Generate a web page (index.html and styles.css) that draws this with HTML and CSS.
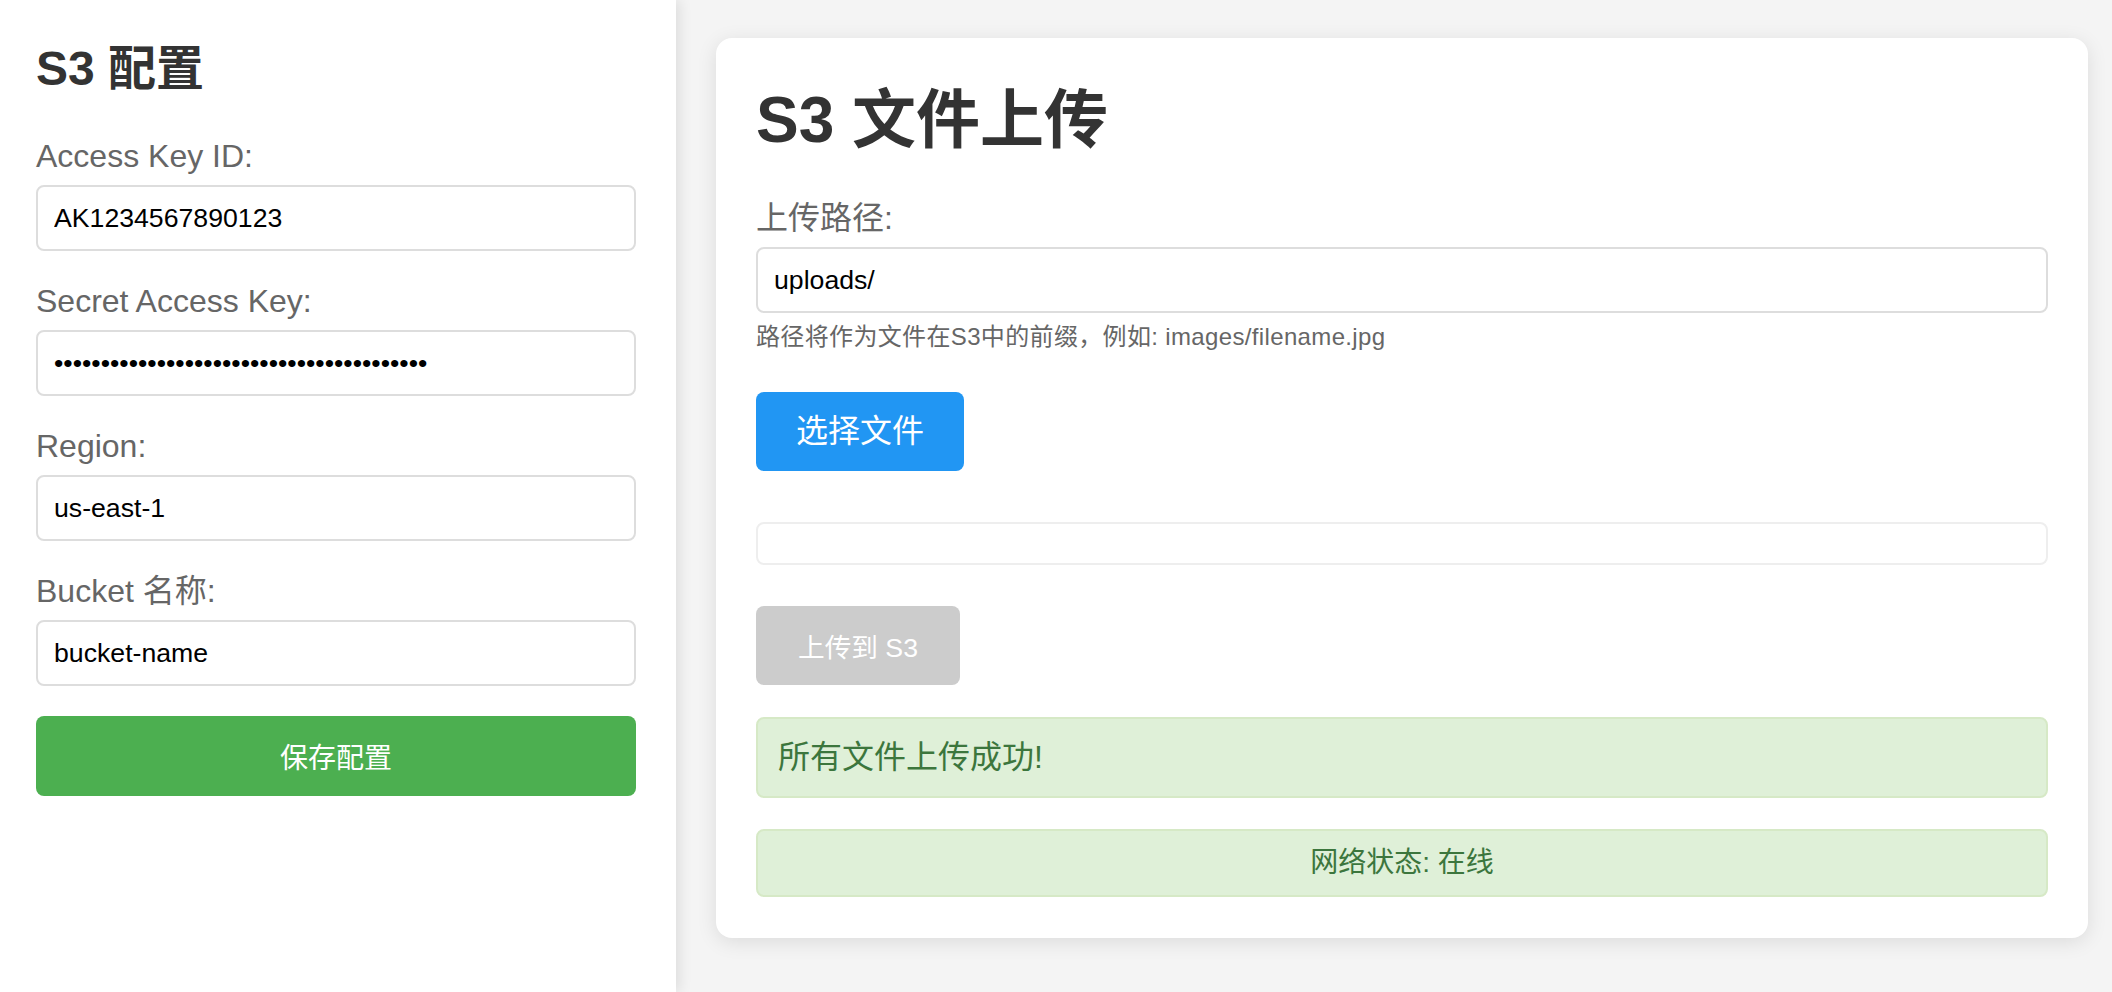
FILE: index.html
```html
<!DOCTYPE html>
<html lang="zh-CN">
<head>
<meta charset="utf-8">
<title>S3 文件上传</title>
<link rel="stylesheet" href="styles.css">
</head>
<body>
<aside class="sidebar">
  <h2 class="side-title">S3 配置</h2>
  <div class="form-group">
    <label class="field-label" for="ak">Access Key ID:</label>
    <input class="field-input" id="ak" type="text" value="AK1234567890123">
  </div>
  <div class="form-group">
    <label class="field-label" for="sk">Secret Access Key:</label>
    <input class="field-input" id="sk" type="password" value="abcdefghijabcdefghijabcdefghijabcdefghij">
  </div>
  <div class="form-group">
    <label class="field-label" for="region">Region:</label>
    <input class="field-input" id="region" type="text" value="us-east-1">
  </div>
  <div class="form-group">
    <label class="field-label" for="bucket">Bucket 名称:</label>
    <input class="field-input" id="bucket" type="text" value="bucket-name">
  </div>
  <button class="save-btn" type="button">保存配置</button>
</aside>
<main class="main">
  <section class="card">
    <h1 class="card-title">S3 文件上传</h1>
    <label class="field-label" for="path">上传路径:</label>
    <input class="field-input" id="path" type="text" value="uploads/">
    <div class="hint">路径将作为文件在S3中的前缀，例如: images/filename.jpg</div>
    <label class="choose-btn">选择文件</label>
    <div class="file-list"></div>
    <button class="upload-btn" type="button" disabled>上传到 S3</button>
    <div class="msg-success">所有文件上传成功!</div>
    <div class="net-status">网络状态: 在线</div>
  </section>
</main>
</body>
</html>
```

FILE: styles.css
```css
* {
  box-sizing: border-box;
}

html, body {
  margin: 0;
  padding: 0;
}

body {
  display: flex;
  height: 992px;
  overflow: hidden;
  background: #f4f4f4;
  font-family: "Liberation Sans", "Noto Sans CJK SC", sans-serif;
  font-size: 32px;
  color: #333;
}

.sidebar {
  width: 676px;
  flex: 0 0 676px;
  background: #fff;
  padding: 41px 40px 0 36px;
  box-shadow: 4px 0 12px rgba(0, 0, 0, 0.09);
  position: relative;
  z-index: 1;
}

.side-title {
  margin: 0 0 39px;
  font-size: 48px;
  line-height: 56px;
  font-weight: bold;
  color: #333;
}

.form-group {
  display: flex;
  flex-direction: column;
  margin-bottom: 30px;
}

.field-label {
  display: block;
  font-size: 32px;
  line-height: 36px;
  padding-top: 2px;
  color: #666;
  margin-bottom: 11px;
}

.field-input {
  display: block;
  width: 100%;
  height: 66px;
  padding: 0 16px;
  border: 2px solid #ddd;
  border-radius: 8px;
  font-family: "Liberation Sans", "Noto Sans CJK SC", sans-serif;
  font-size: 26.67px;
  color: #000;
  background: #fff;
  outline: none;
}

.save-btn {
  display: block;
  width: 100%;
  height: 80px;
  border: none;
  border-radius: 8px;
  background: #4caf50;
  color: #fff;
  font-family: "Liberation Sans", "Noto Sans CJK SC", sans-serif;
  font-size: 28px;
  padding: 0;
}

.main {
  flex: 1;
  padding: 38px 24px 0 40px;
  min-width: 0;
}

.card {
  display: flex;
  flex-direction: column;
  background: #fff;
  border-radius: 16px;
  padding: 45px 40px 41px;
  box-shadow: 0 4px 20px rgba(0, 0, 0, 0.1);
}

.card-title {
  margin: 0 0 41px;
  font-size: 64px;
  line-height: 74px;
  font-weight: bold;
  color: #333;
}

.hint {
  margin-top: 10px;
  font-size: 24px;
  line-height: 28px;
  letter-spacing: 0.35px;
  color: #666;
}

.choose-btn {
  align-self: flex-start;
  margin-top: 41px;
  height: 79px;
  line-height: 79px;
  padding: 0 40px;
  background: #2196f3;
  color: #fff;
  border-radius: 8px;
  font-size: 32px;
}

.file-list {
  margin-top: 51px;
  height: 43px;
  border: 2px solid #eee;
  border-radius: 8px;
}

.upload-btn {
  align-self: flex-start;
  margin-top: 41px;
  height: 79px;
  padding: 0 42px;
  border: none;
  border-radius: 8px;
  background: #ccc;
  color: #fff;
  font-family: "Liberation Sans", "Noto Sans CJK SC", sans-serif;
  font-size: 26.67px;
}

.msg-success {
  margin-top: 32px;
  height: 81px;
  padding: 0 20px;
  line-height: 77px;
  background: #dff0d8;
  border: 2px solid #d6e9c6;
  border-radius: 8px;
  color: #3c763d;
  font-size: 32px;
}

.net-status {
  margin-top: 31px;
  height: 68px;
  line-height: 64px;
  text-align: center;
  background: #dff0d8;
  border: 2px solid #d6e9c6;
  border-radius: 8px;
  color: #3c763d;
  font-size: 28px;
}
```
